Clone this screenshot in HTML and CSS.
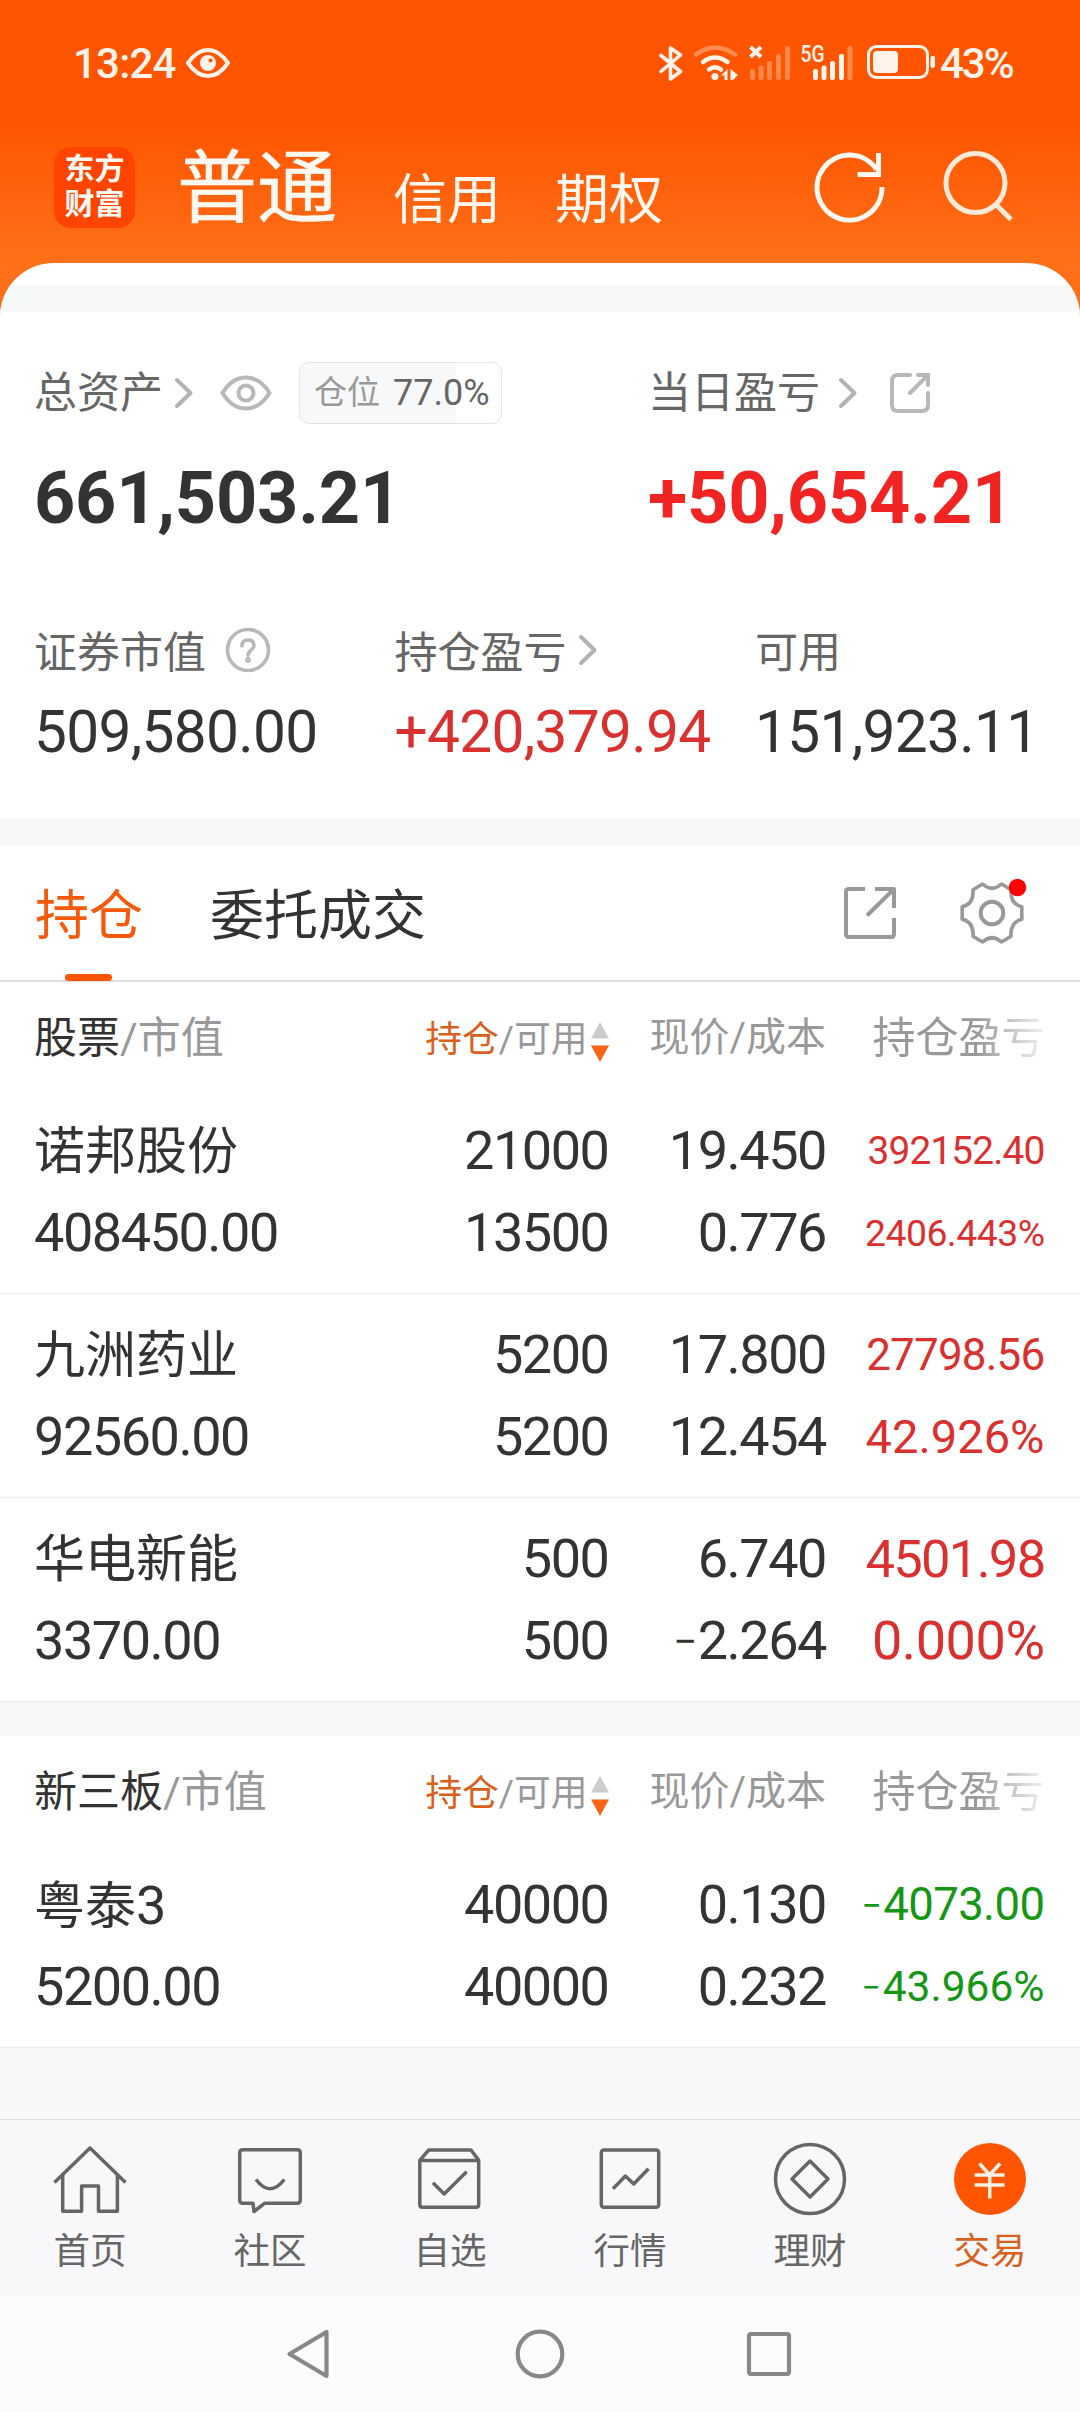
FILE: index.html
```html
<!DOCTYPE html>
<html lang="zh-CN">
<head>
<meta charset="utf-8">
<title>普通交易 - 持仓</title>
<link rel="stylesheet" href="styles.css">
</head>
<body>
<div class="screen">
  <header class="top">
    <div class="status">
      <span class="time">13:24</span>
      <svg class="s-eye" width="44" height="30" viewBox="0 0 44 30"><path d="M2 15Q11 2 22 2T42 15Q33 28 22 28T2 15Z" fill="none" stroke="#fff3ea" stroke-width="4" stroke-linejoin="round"/><circle cx="22" cy="15" r="8" fill="#fff3ea"/><circle cx="24.500" cy="12.500" r="2" fill="#ff5500"/></svg>
      <svg class="s-icons" width="276" height="46" viewBox="659 40 276 46">
        <g fill="none" stroke="#fff3ea" stroke-width="3.600" stroke-linejoin="round" stroke-linecap="round">
          <path d="M661 55.500 680.500 71.500 670.500 79V48L680.500 55 661 71.500"/>
          <path d="M696 54.500Q715 40.500 735 54.500" opacity=".35" stroke-width="4.500"/>
          <path d="M703 62Q715 53 727.500 62" stroke-width="4.500"/>
          <path d="M709 69.500Q715 65 721 69.500" stroke-width="4.500"/>
          <path d="M750.500 47 761 57M761 47 750.500 57" stroke-linecap="butt" stroke-width="4"/>
          <rect x="868.500" y="46.500" width="59" height="31" rx="8" stroke-width="3"/>
        </g>
        <g fill="#fff3ea">
          <circle cx="715" cy="76.500" r="3.600"/>
          <path d="M721 75.500 727.500 69V80H724.500V75.500ZM730.500 69 738 75 733 80H730.500Z"/>
          <g opacity=".32"><rect x="750" y="69" width="5" height="11" rx="2"/><rect x="758.500" y="65.500" width="5" height="14.500" rx="2"/><rect x="767" y="61" width="5" height="19" rx="2"/><rect x="776" y="54" width="5" height="26" rx="2"/><rect x="785" y="46" width="5" height="34" rx="2"/><rect x="847.500" y="46" width="5" height="34" rx="2"/></g>
          <rect x="813" y="69" width="5" height="11" rx="2"/><rect x="821.500" y="65.500" width="5" height="14.500" rx="2"/><rect x="830" y="61" width="5" height="19" rx="2"/><rect x="839" y="54" width="5" height="26" rx="2"/>
          <rect x="873" y="51" width="25" height="22" rx="4"/>
          <rect x="930.500" y="56" width="4.500" height="12" rx="2"/>
          <text class="s-5g" x="800.500" y="62" textLength="24" lengthAdjust="spacingAndGlyphs">5G</text>
        </g>
      </svg>
      <span class="battery">43%</span>
    </div>
    <div class="titlebar">
      <div class="logo">东方<br>财富</div>
      <nav class="modes"><b>普通</b><span>信用</span><span class="m3">期权</span></nav>
      <svg class="refresh" width="76" height="76" viewBox="0 0 76 76" fill="none" stroke="#fff8f0" stroke-width="5"><path d="M70 38A32.500 32.500 0 1 1 64.500 20.500M66.500 4V25.500H45.500"/></svg>
      <svg width="76" height="76" viewBox="0 0 76 76" fill="none" stroke="#ffe9d8" stroke-width="5"><circle cx="36.500" cy="34" r="29.500"/><path d="M56.500 55 72 70.500"/></svg>
    </div>
  </header>

  <main class="sheet">
    <div class="strip first"></div>
    <section class="assets">
      <div class="arow">
        <span>总资产</span>
        <svg class="chev" width="20" height="32" viewBox="0 0 20 32"><path d="M3 3 16.500 16 3 29"/></svg>
        <svg class="eye" width="52" height="36" viewBox="0 0 52 36"><path d="M2.500 18Q12 2.500 26 2.500T49.500 18Q40 33.500 26 33.500T2.500 18Z"/><circle cx="26" cy="18" r="7.500"/></svg>
        <span class="ratio"><i>仓位</i><em>77.0%</em></span>
      </div>
      <div class="arow">
        <span>当日盈亏</span>
        <svg class="chev wide" width="20" height="32" viewBox="0 0 20 32"><path d="M3 3 16.500 16 3 29"/></svg>
        <svg class="share" width="40" height="40" viewBox="0 0 40 40"><path d="M20 2H8Q2 2 2 8V32Q2 38 8 38H32Q38 38 38 32V20M28 2H38V12M38 2 20 20"/></svg>
      </div>
      <strong class="big">661,503.21</strong>
      <strong class="big up">+50,654.21</strong>
    </section>
    <section class="figures">
      <div><p>证券市值 <svg class="help" width="46" height="46" viewBox="0 0 46 46"><circle cx="23" cy="23" r="20.500"/><path d="M17 19Q17 13 23 13T29 18.500C29 23 23 23 23 28.500"/><circle cx="23" cy="33" r="1.200"/></svg></p><b>509,580.00</b></div>
      <div><p>持仓盈亏 <svg class="chev" width="20" height="32" viewBox="0 0 20 32"><path d="M3 3 16.500 16 3 29"/></svg></p><b class="up">+420,379.94</b></div>
      <div><p>可用</p><b>151,923.11</b></div>
    </section>
    <div class="strip"></div>
    <nav class="tabs">
      <span class="on">持仓</span><span class="off">委托成交</span>
      <svg class="out" width="54" height="54" viewBox="0 0 54 54"><path d="M22 3H6Q3 3 3 6V48Q3 51 6 51H48Q51 51 51 48V32M32 3H51V22M51 3 24 29.500"/></svg>
      <svg class="gear" width="66" height="66" viewBox="-33 -33 66 66"><path d="M-9.500-29Q0-20.500 9.500-29L19-23.300Q18-9 29.800-6.300V6.300Q18 9 19 23.300L9.500 29Q0 20.500-9.500 29L-19 23.300Q-18 9-29.800 6.300V-6.300Q-18-9-19-23.300Z" stroke-width="3.600"/><circle r="11.300" stroke-width="4"/><circle class="dot" cx="25.500" cy="-25.500" r="8.700"/></svg>
    </nav>

    <section class="holdings">
      <div class="row head"><span><b>股票</b>/市值</span><span class="h2"><b>持仓</b>/可用<svg width="18" height="40" viewBox="0 0 18 40"><path d="M9 0 18 16.500H0Z" fill="#ccc"/><path d="M0 23.500H18L9 40Z" fill="#f96514"/></svg></span><span class="h3">现价/成本</span><span class="h4">持仓盈亏</span></div>
      <div class="row item">
        <span class="name">诺邦股份</span><span>21000</span><span>19.450</span><span class="up z1">392152.40</span>
        <span>408450.00</span><span>13500</span><span>0.776</span><span class="up z2">2406.443%</span>
      </div>
      <div class="row item">
        <span class="name">九洲药业</span><span>5200</span><span>17.800</span><span class="up z3">27798.56</span>
        <span>92560.00</span><span>5200</span><span>12.454</span><span class="up z4">42.926%</span>
      </div>
      <div class="row item">
        <span class="name">华电新能</span><span>500</span><span>6.740</span><span class="up z5">4501.98</span>
        <span>3370.00</span><span>500</span><span><u>−</u>2.264</span><span class="up z0">0.000%</span>
      </div>
    </section>
    <div class="strip gap"></div>
    <section class="holdings">
      <div class="row head"><span><b>新三板</b>/市值</span><span class="h2"><b>持仓</b>/可用<svg width="18" height="40" viewBox="0 0 18 40"><path d="M9 0 18 16.500H0Z" fill="#ccc"/><path d="M0 23.500H18L9 40Z" fill="#f96514"/></svg></span><span class="h3">现价/成本</span><span class="h4">持仓盈亏</span></div>
      <div class="row item">
        <span class="name">粤泰<span class="n">3</span></span><span>40000</span><span>0.130</span><span class="down z6"><u>−</u>4073.00</span>
        <span>5200.00</span><span>40000</span><span>0.232</span><span class="down z7"><u>−</u>43.966%</span>
      </div>
    </section>
  </main>

  <nav class="dock">
    <a><svg width="76" height="76" viewBox="0 0 76 76"><path d="M2.500 41.500 38 7 73.500 41.500M10.700 34V70.200H29.600V45H46.500V70.200H65.400V34"/></svg>首页</a>
    <a><svg width="76" height="76" viewBox="0 0 76 76"><path d="M11 8.700H65Q68.300 8.700 68.300 12V59Q68.300 62.300 65 62.300H32.500L22 70.500 21 62.300H11Q7.700 62.300 7.700 59V12Q7.700 8.700 11 8.700ZM24 38.500Q38 57 52.300 38.500"/></svg>社区</a>
    <a><svg width="76" height="76" viewBox="0 0 76 76"><path d="M16.700 9H59L66.700 19.300V63.500Q66.700 66.300 64 66.300H10.500Q7.800 66.300 7.800 63.500V19.300ZM7.800 19.500H66.700M20.900 41.700 32.200 53 54.600 30.700"/></svg>自选</a>
    <a><svg width="76" height="76" viewBox="0 0 76 76"><rect x="9.300" y="9" width="57.400" height="57.300" rx="2.500"/><path d="M21 47.700 33.400 35 41.700 43 56.500 27.700"/></svg>行情</a>
    <a><svg width="76" height="76" viewBox="0 0 76 76"><circle cx="38" cy="38" r="34.500"/><path d="M38 20 56 38 38 56 20 38Z"/></svg>理财</a>
    <a class="active"><svg width="76" height="76" viewBox="0 0 76 76"><circle cx="38" cy="38" r="36" fill="#ff5500" stroke="none"/><path d="M27.500 22.500 37.700 34 48 22.500M22.600 34H52.600M22.600 44H52.600M37.700 34V57.500" stroke="#fff0e4"/></svg>交易</a>
  </nav>
  <footer class="keys">
    <svg width="46" height="52" viewBox="0 0 46 52"><path d="M4.500 26 41.500 4V48Z"/></svg>
    <svg class="k2" width="52" height="52" viewBox="0 0 52 52"><circle cx="26" cy="26" r="22.300"/></svg>
    <svg class="k3" width="46" height="46" viewBox="0 0 46 46"><rect x="3" y="3" width="40" height="40" rx="2"/></svg>
  </footer>
</div>
</body>
</html>
```
FILE: styles.css
```css
* { box-sizing: border-box; }
body { margin: 0; background: #fcfcfc; font-family: Roboto, "Noto Sans CJK SC", sans-serif; color: #333; }
svg { display: block; flex: none; }
p { margin: 0; }
i, em { font-style: normal; }
.screen { width: 1080px; height: 2412px; overflow: hidden; display: flex; flex-direction: column; background: #f7f8fa; }

/* orange header */
.top { height: 320px; flex: none; background: linear-gradient(#ff5500 0, #ff5500 125px, #ff7019 263px, #ff7019 100%); }
.status { height: 126px; display: flex; align-items: center; padding-left: 73px; color: #fff3ea; font-weight: 500; font-size: 42px; letter-spacing: -.8px; }
.time { width: 113px; }
.s-icons { margin-left: 429px; }
.s-5g { font-size: 23px; font-weight: 500; letter-spacing: 0; }
.battery { margin-left: 5px; letter-spacing: -2px; }
.titlebar { height: 122px; display: flex; align-items: center; padding-left: 54px; }
.logo { width: 81px; height: 81px; border-radius: 17px; background: #ff4400; color: #fffaf5; font-weight: 700; font-size: 30px; line-height: 35px; text-align: center; padding-top: 4px; }
.modes { display: flex; align-items: baseline; margin-left: 42px; padding-top: 13px; color: #fff8f0; font-size: 54px; line-height: 100px; width: 635px; }
.modes b { font-size: 80px; font-weight: 400; -webkit-text-stroke: .6px #fff8f0; width: 216px; }
.modes span { width: 162px; padding-top: 3px; transform: translateY(3px); }
.refresh { margin-right: 51px; }

/* white sheet overlapping the header */
.sheet { margin-top: -57px; flex: none; border-radius: 54px 54px 0 0; overflow: hidden; background: #fff; }
.strip { height: 27px; background: #f7f8fa; }
.strip.first { margin-top: 22px; height: 27px; }
.strip.gap { height: 34px; }

.assets { height: 288px; padding: 46px 0 0 34px; display: grid; grid-template: 70px 142px / 614px 1fr; font-size: 43px; color: #666; }
.arow { display: flex; align-items: center; line-height: 70px; }
.chev { fill: none; stroke: #b3b3b3; stroke-width: 4; stroke-linecap: round; stroke-linejoin: round; margin-left: 11px; }
.chev.wide { margin-left: 18px; }
.eye, .share, .help { fill: none; stroke: #b8b8b8; stroke-width: 4; stroke-linecap: round; }
.eye { margin-left: 26px; }
.share { margin-left: 32px; }
.help { stroke-width: 3.600; margin-left: 19px; }
.ratio { margin-left: 27px; width: 203px; height: 62px; border: 1.500px solid #e3e4e6; border-radius: 10px; background: linear-gradient(90deg, #f7f8fa 77.500%, #fff 77.500%); display: flex; align-items: center; padding-left: 14px; }
.ratio i { font-size: 33px; color: #999; width: 79px; }
.ratio em { font-size: 36px; }
.big { font-size: 72px; line-height: 142px; letter-spacing: -.2px; color: #333; }
.assets .big.up { color: #f12424; }
.figures { height: 219px; display: flex; padding: 9px 0 0 34px; }
.figures div { width: 360.500px; flex: none; }
.figures p { display: flex; align-items: center; height: 80px; font-size: 43px; color: #666; }
.figures p svg { position: relative; top: 1px; }
.figures b { display: block; font-weight: 400; font-size: 58.600px; line-height: 87px; letter-spacing: -.7px; }
.up { color: #d93030; }
.down { color: #159615; }

/* tabs */
.tabs { height: 136px; border-bottom: 2px solid #dfdfdf; display: flex; align-items: center; padding-left: 35px; font-size: 54px; line-height: 134px; }
.tabs .on { position: relative; padding-top: 7px; color: #f45a0a; width: 175px; height: 134px; line-height: 127px; }
.tabs .on::after { content: ""; position: absolute; left: 30px; bottom: -1px; width: 47px; height: 7px; border-radius: 4px; background: #ff5500; }
.tabs .off { padding-top: 7px; line-height: 127px; width: 633px; }
.out, .gear { fill: none; stroke: #999; stroke-width: 4; stroke-linejoin: round; }
.gear { margin-left: 62px; overflow: visible; }
.dot { fill: #f00; stroke: none; }

/* holdings table */
.row { display: grid; grid-template-columns: 341px 233.500px 217.500px 218.500px; padding-left: 34px; justify-items: end; white-space: nowrap; }
.row > :nth-child(4n + 1) { justify-self: start; }
.head { height: 108px; line-height: 112px; font-size: 43px; color: #999; }
.head b { font-weight: 400; color: #333; }
.head .h2 { display: flex; align-items: center; font-size: 36.800px; line-height: 115px; }
.head .h2 b { color: #d9601c; }
.head .h2 svg { margin-left: 3px; position: relative; top: 2px; }
.head .h3 { font-size: 40px; }
.head .h4 { -webkit-mask-image: linear-gradient(90deg, #000 60%, rgba(0, 0, 0, .12)); mask-image: linear-gradient(90deg, #000 60%, rgba(0, 0, 0, .12)); }
.item { height: 204px; padding-top: 20px; border-bottom: 1.500px solid #ebecee; line-height: 82px; font-size: 54px; letter-spacing: -.027em; grid-template-rows: 82px 82px; }
.name { font-size: 51px; letter-spacing: 0; line-height: 84px; }
.name .n { font-size: 54px; }
.item u { text-decoration: none; font-size: .78em; margin-right: 2px; position: relative; top: -.06em; }
.z0 { letter-spacing: -.008em; }
.z1 { font-size: 38.800px; letter-spacing: -.022em; }
.z2 { font-size: 37.300px; letter-spacing: -.013em; }
.z3 { font-size: 44px; letter-spacing: -.018em; }
.z4 { font-size: 47px; letter-spacing: 0; }
.z5 { font-size: 52.500px; letter-spacing: -.032em; }
.z6 { font-size: 45.500px; letter-spacing: -.013em; }
.z7 { font-size: 42.500px; letter-spacing: 0; }

/* bottom bars */
.dock { margin-top: auto; height: 177px; flex: none; border-top: 1.500px solid #e2e3e5; background: #f8f8fa; display: grid; grid-template-columns: repeat(6, 180px); }
.dock a { display: flex; flex-direction: column; align-items: center; padding-top: 21px; font-size: 36.500px; line-height: 70px; color: #666; }
.dock svg { fill: none; stroke: #666; stroke-width: 3.500; stroke-linejoin: round; }
.dock .active { color: #d9601c; }
.keys { height: 116px; flex: none; background: #fcfcfc; display: flex; align-items: center; padding-left: 285px; }
.keys svg { fill: none; stroke: #888; stroke-width: 4.200; stroke-linejoin: round; }
.k2 { margin-left: 183px; }
.k3 { margin-left: 180px; }
```
